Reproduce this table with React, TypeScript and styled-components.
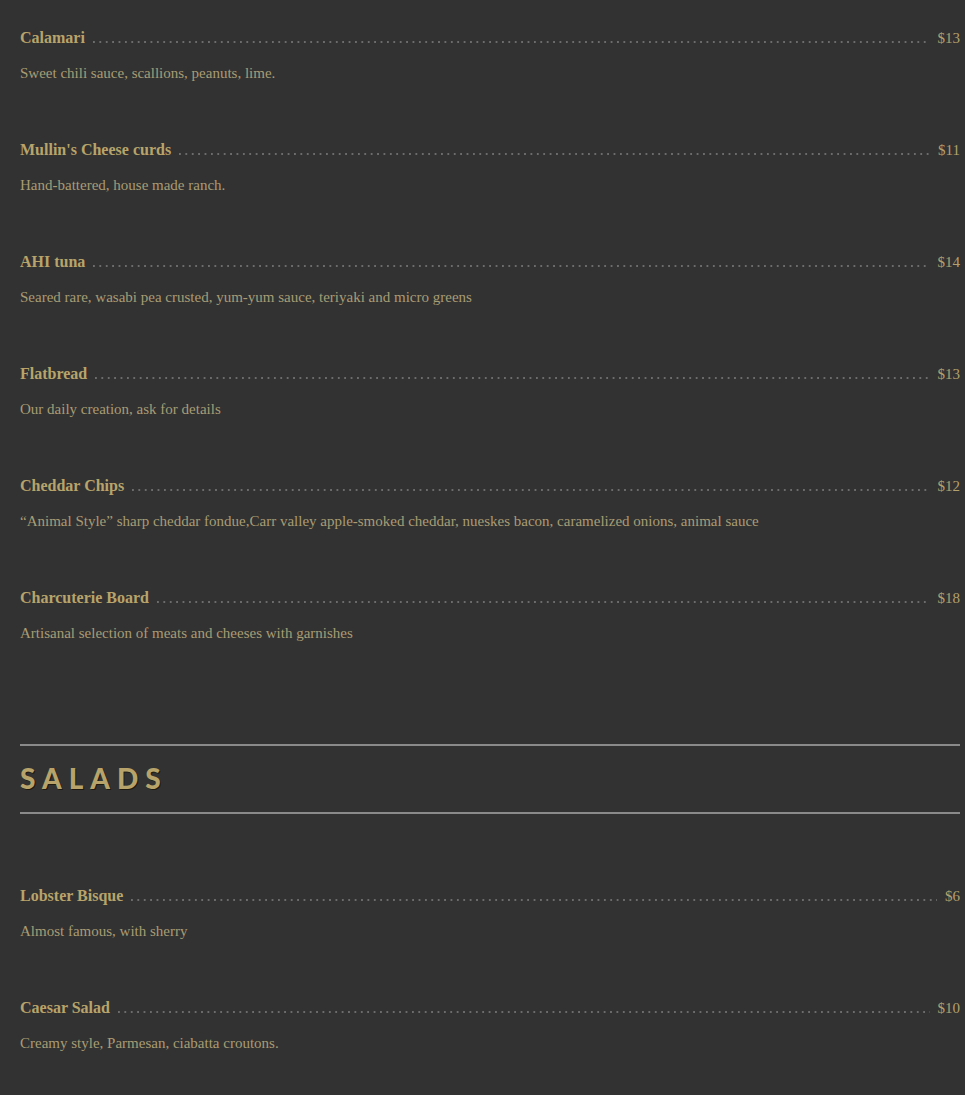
import styled, { createGlobalStyle } from "styled-components";

const GlobalStyle = createGlobalStyle`
  html, body {
    margin: 0;
    padding: 0;
    background-color: #323232;
  }
`;

const Page = styled.div`
  padding: 26px 5px 20px 20px;
  font-family: "Liberation Serif", "Times New Roman", serif;
`;

const Item = styled.div`
  padding-bottom: 55px;
`;

const TitleRow = styled.div`
  display: flex;
  align-items: baseline;
  height: 24px;
  line-height: 24px;
`;

const Name = styled.span`
  font-size: 16px;
  font-weight: bold;
  color: #b8a46a;
  white-space: nowrap;
`;

const Leader = styled.span`
  flex: 1;
  height: 2px;
  margin: 0 8px 0 8px;
  background-image: linear-gradient(to right, #6c6c6c 0 2px, transparent 2px);
  background-size: 6.4px 2px;
  background-repeat: repeat-x;
  align-self: center;
  position: relative;
  top: 4px;
`;

const Price = styled.span`
  font-size: 15px;
  color: #b3a06c;
  white-space: nowrap;
`;

const Desc = styled.p`
  margin: 13px 0 0;
  font-size: 15px;
  line-height: 20px;
  color: #a89c74;
`;

const Section = styled.div<{ $gap: number }>`
  margin-top: ${(p) => p.$gap}px;
  border-top: 2px solid #8a8a8a;
  border-bottom: 2px solid #8a8a8a;
  height: 66px;
  display: flex;
  align-items: center;
  margin-bottom: 70px;
`;

const Heading = styled.h2`
  margin: 0;
  font-family: Lato, "DejaVu Sans", sans-serif;
  font-weight: 900;
  font-size: 28px;
  letter-spacing: 7px;
  color: #b8a46a;
  text-shadow: 1px 1px 0 #1e1a10;
  position: relative;
  top: -1px;
`;

type Dish = { name: string; price: string; desc: string };

const starters: Dish[] = [
  { name: "Calamari", price: "$13", desc: "Sweet chili sauce, scallions, peanuts, lime." },
  { name: "Mullin's Cheese curds", price: "$11", desc: "Hand-battered, house made ranch." },
  { name: "AHI tuna", price: "$14", desc: "Seared rare, wasabi pea crusted, yum-yum sauce, teriyaki and micro greens" },
  { name: "Flatbread", price: "$13", desc: "Our daily creation, ask for details" },
  {
    name: "Cheddar Chips",
    price: "$12",
    desc: "\u201cAnimal Style\u201d sharp cheddar fondue,Carr valley apple-smoked cheddar, nueskes bacon, caramelized onions, animal sauce",
  },
  { name: "Charcuterie Board", price: "$18", desc: "Artisanal selection of meats and cheeses with garnishes" },
];

const salads: Dish[] = [
  { name: "Lobster Bisque", price: "$6", desc: "Almost famous, with sherry" },
  { name: "Caesar Salad", price: "$10", desc: "Creamy style, Parmesan, ciabatta croutons." },
];

function MenuItem({ dish }: { dish: Dish }) {
  return (
    <Item>
      <TitleRow>
        <Name>{dish.name}</Name>
        <Leader />
        <Price>{dish.price}</Price>
      </TitleRow>
      <Desc>{dish.desc}</Desc>
    </Item>
  );
}

function App() {
  return (
    <>
      <GlobalStyle />
      <Page>
        {starters.map((d) => (
          <MenuItem key={d.name} dish={d} />
        ))}
        <Section $gap={46}>
          <Heading>SALADS</Heading>
        </Section>
        {salads.map((d) => (
          <MenuItem key={d.name} dish={d} />
        ))}
      </Page>
    </>
  );
}

export default App;
